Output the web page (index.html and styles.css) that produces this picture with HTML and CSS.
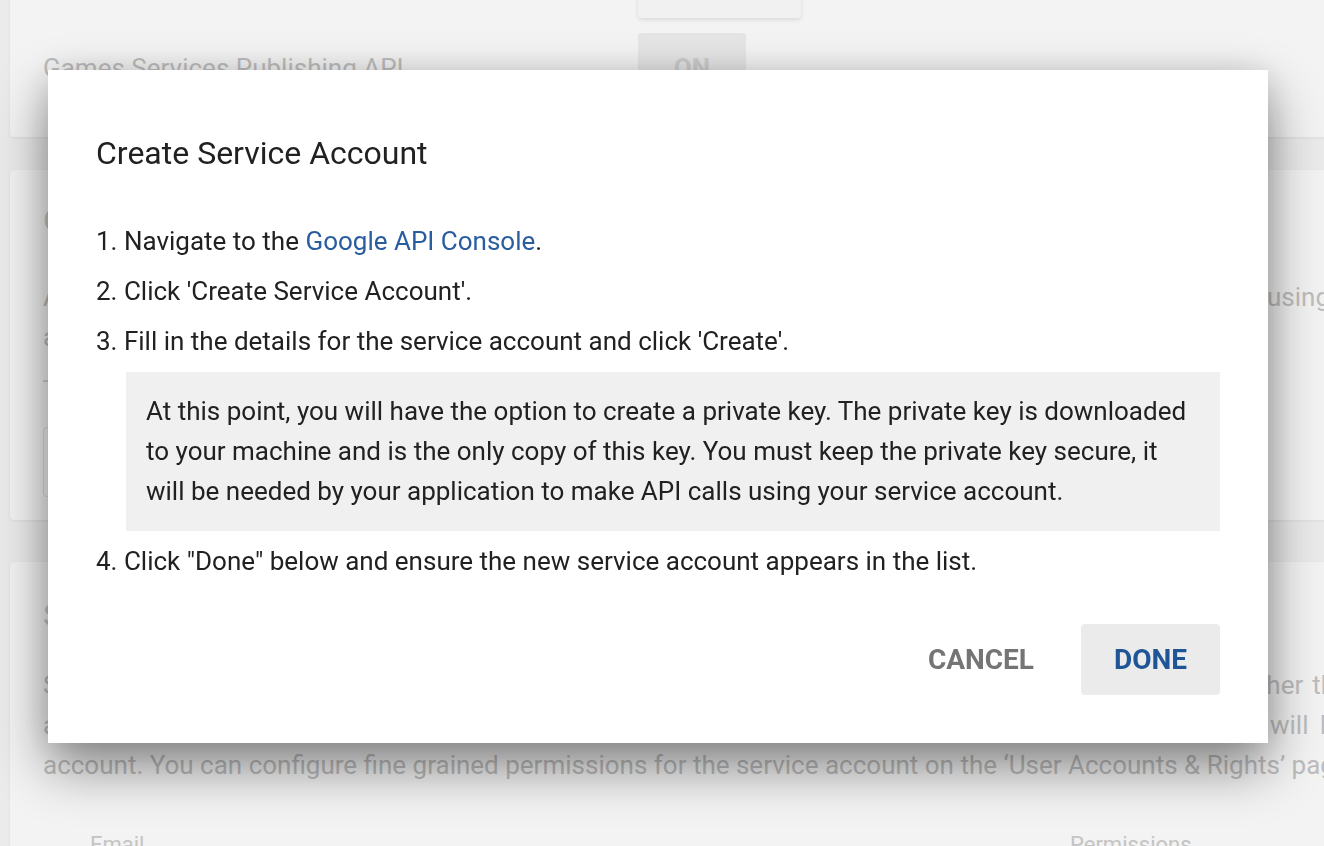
FILE: index.html
```html
<!DOCTYPE html>
<html lang="en">
<head>
  <meta charset="UTF-8">
  <meta name="viewport" content="width=device-width, initial-scale=1.0">
  <title>API access</title>
  <link rel="stylesheet" href="styles.css">
</head>
<body>
  <div class="page">
    <!-- Linked APIs -->
    <section class="card card-apis">
      <div class="setting-row">
        <span></span>
        <button class="raised-btn">LINK</button>
      </div>
      <div class="setting-row setting-row-api">
        <span class="setting-label">Games Services Publishing API</span>
        <button class="flat-btn">ON</button>
      </div>
    </section>

    <!-- OAuth clients -->
    <section class="card card-oauth">
      <h2 class="card-title">OAuth clients</h2>
      <div class="para para-oauth">
        <div class="para-line">API access is granted through OAuth clients. Create a client to call the API on behalf of a signed in user using</div>
        <div class="para-line para-line-last">an OAuth client ID. Clients created here can be managed from the Google API Console.</div>
      </div>
      <hr class="divider">
      <div class="client-box"></div>
    </section>

    <!-- Service accounts -->
    <section class="card card-service">
      <h2 class="card-title">Service accounts</h2>
      <div class="para para-service">
        <div class="para-line">Service accounts allow access to the Google Play Developer Publishing API on behalf of an end user other than the</div>
        <div class="para-line">application developer. Service accounts are created in the Google API Console and their API access will be able</div>
        <div class="para-line para-line-last">account. You can configure fine grained permissions for the service account on the ‘User Accounts &amp; Rights’ page.</div>
      </div>
      <div class="table-head">
        <span>Email</span>
        <span>Permissions</span>
      </div>
    </section>
  </div>

  <div class="overlay">
    <div class="dialog">
      <h1 class="dialog-title">Create Service Account</h1>

      <ol class="steps">
        <li>Navigate to the <a class="link" href="#">Google API Console</a>.</li>
        <li>Click 'Create Service Account'.</li>
        <li>Fill in the details for the service account and click 'Create'.
          <div class="note">At this point, you will have the option to create a private key. The private key is downloaded to your machine and is the only copy of this key. You must keep the private key secure, it will be needed by your application to make API calls using your service account.</div>
        </li>
        <li>Click "Done" below and ensure the new service account appears in the list.</li>
      </ol>

      <div class="actions">
        <button class="btn">CANCEL</button>
        <button class="btn btn-primary">DONE</button>
      </div>
    </div>
  </div>
</body>
</html>
```

FILE: styles.css
```css
* {
  box-sizing: border-box;
}

body {
  margin: 0;
  height: 846px;
  overflow: hidden;
  font-family: Roboto, "Noto Sans", sans-serif;
  background-color: #ebebeb;
}

/* Page behind the dialog */
.page {
  width: 1390px;
  padding: 0 10px;
  margin-top: -58px;
}

.card {
  background-color: #f3f3f3;
  border-radius: 4px;
  box-shadow: 0 1px 3px rgba(0, 0, 0, 0.06);
  padding: 0 33px;
  overflow: hidden;
}

.card-apis {
  padding-top: 20px;
  padding-bottom: 34px;
  margin-bottom: 33px;
}

.setting-row {
  display: grid;
  grid-template-columns: 595px auto;
  align-items: center;
}

.setting-row-api {
  margin-top: 15px;
}

.setting-label {
  font-size: 26px;
  line-height: 40px;
  color: #bdbdbd;
}

.raised-btn {
  width: 163px;
  height: 56px;
  border: none;
  border-radius: 4px;
  background-color: #f1f1f1;
  box-shadow: 0 2px 4px rgba(0, 0, 0, 0.1);
  color: #d0d0d0;
  font-family: inherit;
  font-size: 24px;
  font-weight: 500;
}

.flat-btn {
  width: 108px;
  height: 70px;
  border: none;
  border-radius: 3px;
  background-color: #e5e5e5;
  color: #cdcdcd;
  font-family: inherit;
  font-size: 26px;
  font-weight: 700;
}

.card-oauth {
  padding-top: 31px;
  padding-bottom: 23px;
  margin-bottom: 42px;
}

.card-service {
  padding-top: 34px;
  padding-bottom: 40px;
}

.card-title {
  margin: 0;
  font-size: 32px;
  font-weight: 400;
  line-height: 38px;
  color: #c6c6c6;
}

.para {
  font-size: 26px;
  line-height: 40px;
  color: #bdbdbd;
}

.para-oauth {
  margin-top: 38px;
}

.para-service {
  margin-top: 31px;
}

.para-line {
  white-space: nowrap;
  text-align: justify;
  text-align-last: justify;
}

.para-oauth .para-line {
  width: 1287px;
}

.para-service .para-line {
  width: 1366px;
}

.para .para-line-last {
  text-align-last: left;
}

.divider {
  width: 40%;
  margin: 23px 0 0;
  border: none;
  border-top: 2px solid #d2d2d2;
}

.client-box {
  width: 50%;
  height: 70px;
  margin-top: 45px;
  border: 1px solid #dddddd;
  border-radius: 4px;
}

.table-head {
  display: grid;
  grid-template-columns: 980px auto;
  margin-top: 40px;
  padding-left: 47px;
  font-size: 22px;
  line-height: 40px;
  color: #c4c4c4;
}

/* Dialog */
.overlay {
  position: fixed;
  top: 0;
  left: 0;
  width: 100%;
  height: 100%;
  display: flex;
  align-items: flex-start;
  padding: 70px 0 0 48px;
}

.dialog {
  width: 1220px;
  background-color: #ffffff;
  padding: 0 48px 48px;
  box-shadow: 0 24px 50px rgba(0, 0, 0, 0.45), 0 0 30px rgba(0, 0, 0, 0.1);
}

.dialog-title {
  margin: 0;
  padding-top: 64px;
  font-size: 32px;
  font-weight: 400;
  line-height: 38px;
  color: #212121;
}

.steps {
  margin: 49px 0 0;
  padding: 0;
  list-style: decimal inside;
  font-size: 26px;
  line-height: 40px;
  color: #212121;
}

.steps li {
  margin-bottom: 10px;
}

.steps li:last-child {
  margin-bottom: 0;
}

.link {
  color: #2a5da0;
  text-decoration: none;
}

.note {
  margin: 11px 0 0 30px;
  padding: 19px 20px 20px;
  background-color: #f0f0f0;
}

.actions {
  display: flex;
  justify-content: flex-end;
  gap: 14px;
  margin-top: 43px;
}

.btn {
  height: 71px;
  padding: 0 33px;
  border: none;
  border-radius: 4px;
  background-color: transparent;
  color: #757575;
  font-family: inherit;
  font-size: 28px;
  font-weight: 700;
  cursor: pointer;
}

.btn-primary {
  background-color: #ebebeb;
  color: #1f5597;
}
```
